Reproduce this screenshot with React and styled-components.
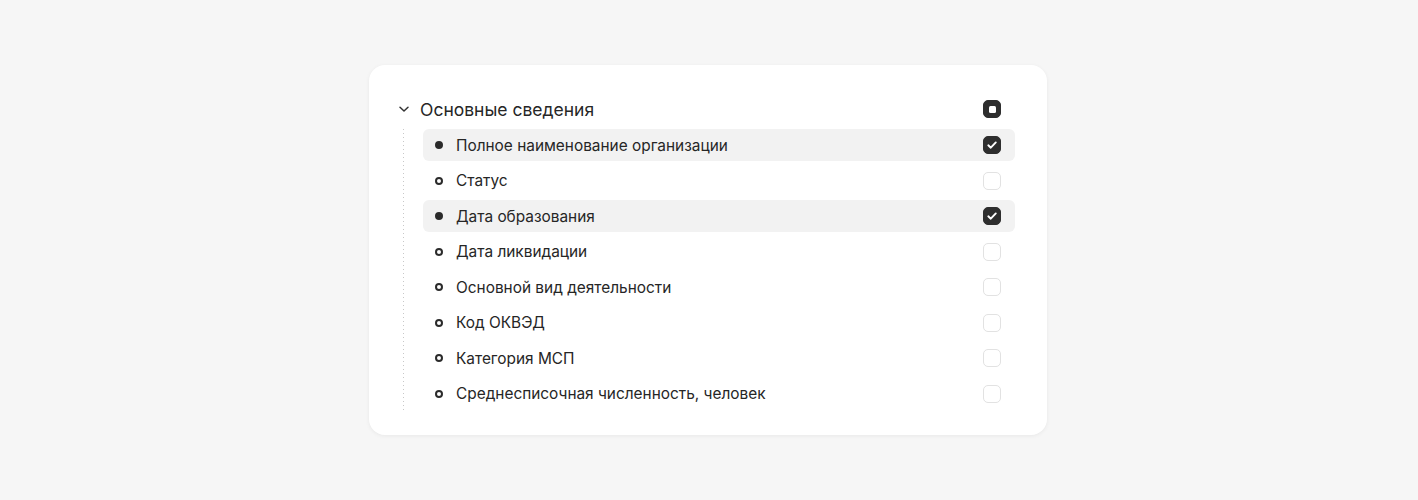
import { useState } from "react";
import styled, { createGlobalStyle } from "styled-components";

const GlobalStyle = createGlobalStyle`
  html, body {
    margin: 0;
    padding: 0;
    background: #f6f6f6;
    font-family: Inter, "Noto Sans", sans-serif;
    color: #222;
  }
`

const Page = styled.div`
  min-height: 500px;
  display: flex;
  justify-content: center;
  align-items: flex-start;
  padding: 65px 2px 0 0;
  box-sizing: border-box;
`

const Card = styled.div`
  width: 678px;
  box-sizing: border-box;
  background: #fff;
  border-radius: 16px;
  box-shadow: 0 1px 4px rgba(0, 0, 0, 0.06);
  padding: 28px 32px 25px 28px;
`

const Header = styled.div`
  height: 32px;
  display: flex;
  align-items: center;
  padding-right: 14px;
`

const Chevron = styled.button`
  width: 14px;
  height: 14px;
  padding: 0;
  border: none;
  background: none;
  display: flex;
  align-items: center;
  justify-content: center;
  color: #333;
  cursor: pointer;
  margin-right: 9px;
`

const HeaderTitle = styled.div`
  flex: 1;
  font-size: 17.5px;
  color: #262626;
`

const Children = styled.div`
  margin-top: 4px;
  margin-left: 6px;
  padding-left: 20px;
  background-image: linear-gradient(to bottom, #c8c8c8 1px, transparent 1px);
  background-size: 1px 4px;
  background-repeat: repeat-y;
  background-position: 0 0;
  display: flex;
  flex-direction: column;
  gap: 3.5px;
`

const Row = styled.div`
  height: 32px;
  display: flex;
  align-items: center;
  border-radius: 6px;
  padding: 0 14px 0 12px;
  background: ${p => (p.$active ? "#f2f2f2" : "transparent")};
  cursor: pointer;
`

const Bullet = styled.span`
  width: 8px;
  height: 8px;
  box-sizing: border-box;
  border-radius: 50%;
  border: 2px solid #2b2b2b;
  background: ${p => (p.$filled ? "#2b2b2b" : "transparent")};
  margin-right: 13px;
  flex-shrink: 0;
`

const Label = styled.div`
  flex: 1;
  font-size: 15.4px;
  color: #262626;
`

const Box = styled.span`
  width: 18px;
  height: 18px;
  box-sizing: border-box;
  border-radius: 5px;
  border: 1.5px solid ${p => (p.$on ? "#2e2e2e" : "#e2e2e2")};
  background: ${p => (p.$on ? "#2e2e2e" : "#fff")};
  display: flex;
  align-items: center;
  justify-content: center;
  flex-shrink: 0;
`

const Dash = styled.span`
  width: 7px;
  height: 7px;
  border-radius: 1.5px;
  background: #fff;
`

const items = [
  ["Полное наименование организации", true],
  ["Статус", false],
  ["Дата образования", true],
  ["Дата ликвидации", false],
  ["Основной вид деятельности", false],
  ["Код ОКВЭД", false],
  ["Категория МСП", false],
  ["Среднесписочная численность, человек", false],
]

const Check = () => (
  <svg width="12" height="12" viewBox="0 0 12 12" fill="none">
    <path d="M2.3 6.3 4.8 8.7 9.8 3.4" stroke="#fff" strokeWidth="1.9" strokeLinecap="round" strokeLinejoin="round" />
  </svg>
)

const App = () => {
  const [checked, setChecked] = useState(items.map(i => i[1]))
  const all = checked.every(Boolean)
  const some = checked.some(Boolean)

  const toggle = idx => setChecked(c => c.map((v, i) => (i === idx ? !v : v)))

  return (
    <>
      <GlobalStyle />
      <Page>
        <Card>
          <Header>
            <Chevron>
              <svg width="12" height="12" viewBox="0 0 12 12" fill="none">
                <path d="M2 4.2 6 8 10 4.2" stroke="#333" strokeWidth="1.5" strokeLinecap="round" strokeLinejoin="round" />
              </svg>
            </Chevron>
            <HeaderTitle>Основные сведения</HeaderTitle>
            <Box $on={some}>{all ? <Check /> : some ? <Dash /> : null}</Box>
          </Header>
          <Children>
            {items.map(([label], i) => (
              <Row key={label} $active={checked[i]} onClick={() => toggle(i)}>
                <Bullet $filled={checked[i]} />
                <Label>{label}</Label>
                <Box $on={checked[i]}>{checked[i] && <Check />}</Box>
              </Row>
            ))}
          </Children>
        </Card>
      </Page>
    </>
  )
}

export default App
